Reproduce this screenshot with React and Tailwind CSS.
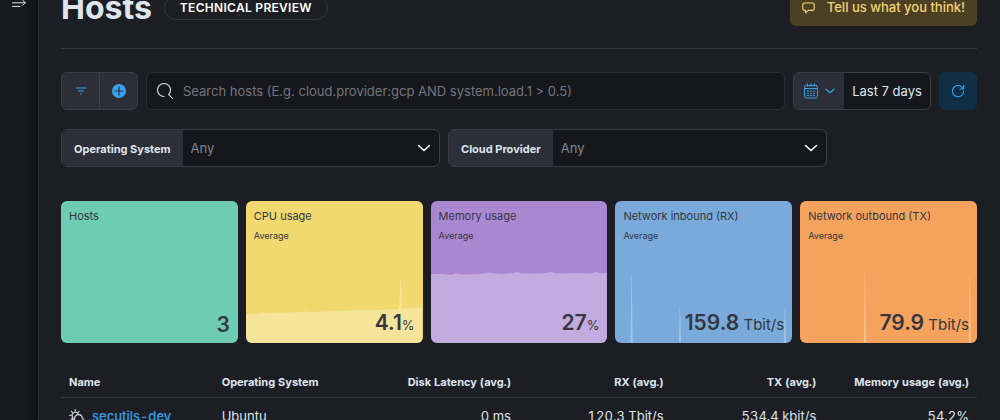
function SearchIcon() {
  return (
    <svg width="16" height="16" viewBox="0 0 16 16" fill="#dfe5ef">
      <path d="M11.271 11.978l3.872 3.873a.502.502 0 00.708 0 .502.502 0 000-.708l-3.565-3.564c2.38-2.747 2.267-6.923-.342-9.532-2.73-2.73-7.17-2.73-9.898 0-2.728 2.729-2.728 7.17 0 9.9a6.955 6.955 0 004.949 2.05.5.5 0 000-1 5.96 5.96 0 01-4.242-1.757 6.01 6.01 0 010-8.486 6.004 6.004 0 018.484 0 6.01 6.01 0 010 8.486.5.5 0 00.034.738z" />
    </svg>
  );
}

function ChevronIcon({ className, size = 14 }) {
  return (
    <svg className={className} width={size} height={size} viewBox="0 0 14 14" fill="none" stroke="currentColor" strokeWidth="1.6" strokeLinecap="round" strokeLinejoin="round">
      <path d="M1.5 4.5l5.5 5 5.5-5" />
    </svg>
  );
}

function CalendarIcon() {
  return (
    <svg width="16" height="16" viewBox="0 0 16 16" fill="none" stroke="currentColor" strokeWidth="1">
      <rect x="1.5" y="2.5" width="13" height="12.5" rx="1.8" />
      <path d="M1.5 5.5h13M4.5 .5v3M8 .5v3M11.5 .5v3" />
      <path d="M4 8h2M7 8h2M10 8h2M4 10.3h2M7 10.3h2M10 10.3h2M4 12.6h2M7 12.6h2M10 12.6h2" />
    </svg>
  );
}

function CloudSunIcon() {
  return (
    <svg width="16" height="16" viewBox="0 0 16 16" fill="none" stroke="#dfe5ef" strokeWidth="1.1" strokeLinecap="round">
      <path d="M6.2 .6v1.6M2.3 2.3l1.1 1.1M.6 6.2h1.6M10.1 2.3L9 3.4M2.4 10l1-.9" />
      <path d="M4.2 9a3.3 3.3 0 1 1 5.2-3.8" />
      <path d="M5 15a2.4 2.4 0 0 1 .6-4.8 3.9 3.9 0 0 1 3.6-4.6 4.1 4.1 0 0 1 4.2 3.8 3 3 0 0 1-.9 5.6z" />
    </svg>
  );
}

const metrics = [
  { title: 'Hosts', value: '3', color: 'bg-[#6dccb1]' },
  {
    title: 'CPU usage', sub: 'Average', value: '4.1', unit: '%', color: 'bg-[#f1d86f]',
    area: 'M0 113L14 112.5L16 111.5L18 112.3L59 111L60 108.5L61 111L90 110L120 109L152 108L153.5 106L154.3 79L155.3 79L156 107.5L176 106.5V142H0z',
  },
  {
    title: 'Memory usage', sub: 'Average', value: '27', unit: '%', color: 'bg-[#aa87d1]',
    area: 'M0 73L12 73L20 74L25 72.5L33 73.5L50 73L56 71.5L70 73L82 72L86 71L91 72.5L112 72.5L120 71L126 72.5L148 72L160 72.5L165 71L170 72.5L177 72V142H0z',
  },
  {
    title: 'Network inbound (RX)', sub: 'Average', value: '159.8', unit: ' Tbit/s', color: 'bg-[#79aad9]',
    area: 'M15.5 142L16.3 74h.4L17.8 142zM64 142L64.8 107h.4L66.2 142zM169 142L169.8 107h.4L171.2 142z',
  },
  {
    title: 'Network outbound (TX)', sub: 'Average', value: '79.9', unit: ' Tbit/s', color: 'bg-[#f5a35c]',
    area: 'M64 142L64.8 71h.4L66.2 142zM169 142L169.8 75h.4L171.2 142z',
  },
];

function MetricCard({ title, sub, value, unit, color, area }) {
  return (
    <div className={`relative flex h-[142px] flex-col overflow-hidden rounded-md px-2 pt-1.5 pb-1 text-[#343741] ${color}`}>
      {area && (
        <svg className="absolute inset-0 h-full w-full" viewBox="0 0 177 142" preserveAspectRatio="none">
          <path d={area} fill="#fff" fillOpacity="0.3" />
        </svg>
      )}
      <h2 className="relative text-[11px] leading-[18px]">{title}</h2>
      {sub && <p className="relative mt-1 text-[9px] leading-[14px]">{sub}</p>}
      <p className="relative mt-auto text-right text-[21px] leading-[28px] font-semibold whitespace-pre">
        {value}
        {unit && <span className={unit === '%' ? 'text-[13px] font-normal' : 'text-[15px] font-normal'}>{unit}</span>}
      </p>
    </div>
  );
}

function FilterSelect({ id, label }) {
  return (
    <div className="flex h-[38px] w-[379px] overflow-hidden rounded-md border border-[#3a3c44] bg-[#16171c]">
      <label htmlFor={id} className="flex items-center bg-[#2c2e38] px-3 pt-0.5 text-[11px] font-bold">{label}</label>
      <div className="relative flex-1">
        <select id={id} className="h-full w-full appearance-none bg-transparent px-2 pt-0.5 text-[13px] text-[#81858f] outline-none">
          <option>Any</option>
        </select>
        <ChevronIcon className="pointer-events-none absolute top-[11px] right-2 text-white" />
      </div>
    </div>
  );
}

const columns = ['Name', 'Operating System', 'Disk Latency (avg.)', 'RX (avg.)', 'TX (avg.)', 'Memory usage (avg.)'];

const hosts = [
  { name: 'secutils-dev', os: 'Ubuntu', stats: ['0 ms', '120.3 Tbit/s', '534.4 kbit/s', '54.2%'] },
];

export default function App() {
  return (
    <div className="flex h-screen overflow-hidden bg-[#1d1e24] font-['Inter',sans-serif] text-[13px] text-[#dfe5ef]">
      <aside className="w-[39px] shrink-0 border-r border-[#2c2d33] bg-linear-to-r from-[#18191e] from-60% to-[#111216]">
        <button aria-label="Expand navigation" className="ml-3 block">
          <svg width="14" height="8" viewBox="0 0 14 8" fill="none" stroke="#dfe5ef" strokeWidth="1" strokeLinecap="round" strokeLinejoin="round">
            <path d="M.5 2.8h12.8M.5 6.4h7.5M10.8 .2l2.5 2.6-2.5 2.4" />
          </svg>
        </button>
      </aside>

      <main className="min-w-0 flex-1 pr-[23px] pl-[22px]">
        {/* Page header */}
        <header className="-mt-3 flex h-[61px] items-start justify-between border-b border-[#343541]">
          <div className="flex h-[38px] items-center gap-3 pt-0.5">
            <h1 className="text-[32px] leading-[38px] font-bold">Hosts</h1>
            <span className="flex h-6 items-center rounded-full border border-[#343741] px-[15px] text-[12px] font-semibold tracking-wide text-white uppercase">Technical preview</span>
          </div>
          <button className="flex h-[38px] items-center gap-3 rounded-md bg-[#4b4024] px-3 pt-0.5 font-medium text-[#f3d371]">
            <svg width="13" height="12" viewBox="0 0 13 12" fill="none" stroke="currentColor" strokeWidth="1.1" strokeLinejoin="round">
              <path d="M2.5 1h8a1.7 1.7 0 0 1 1.7 1.7v4a1.7 1.7 0 0 1-1.7 1.7H6.3L3.5 11V8.4h-1A1.7 1.7 0 0 1 .8 6.7v-4A1.7 1.7 0 0 1 2.5 1z" />
            </svg>
            Tell us what you think!
          </button>
        </header>

        {/* Search bar */}
        <div className="mt-[23px] flex h-[38px] gap-2">
          <div className="flex w-[77px] shrink-0 divide-x divide-[#3f414a] overflow-hidden rounded-md border border-[#3a3c44] bg-[#2c2e38] text-[#36a2ef]">
            <button aria-label="Saved query menu" className="flex flex-1 items-center justify-center">
              <svg width="10" height="8" viewBox="0 0 10 8" stroke="currentColor" strokeWidth="1.1">
                <path d="M0 1h10M2 4h6M4.2 7h1.6" />
              </svg>
            </button>
            <button aria-label="Add filter" className="flex flex-1 items-center justify-center">
              <svg width="14" height="14" viewBox="0 0 14 14">
                <circle cx="7" cy="7" r="7" fill="currentColor" />
                <path d="M7 3v8M3 7h8" stroke="#2c2e38" strokeWidth="1.2" strokeLinecap="round" />
              </svg>
            </button>
          </div>
          <label className="flex min-w-0 flex-1 items-center gap-2.5 rounded-md border border-[#2b2c33] bg-[#16171c] px-2.5">
            <SearchIcon />
            <input type="text" aria-label="Search hosts" placeholder="Search hosts (E.g. cloud.provider:gcp AND system.load.1 > 0.5)" className="min-w-0 flex-1 bg-transparent pt-0.5 outline-none placeholder:text-[#73767f]" />
          </label>
          <div className="flex w-[138px] shrink-0 overflow-hidden rounded-md border border-[#3a3c44] bg-[#16171c]">
            <button aria-label="Date quick select" className="flex w-[50px] items-center justify-center gap-1.5 bg-[#2c2e38] text-[#36a2ef]">
              <CalendarIcon />
              <ChevronIcon size={10} />
            </button>
            <button className="flex-1 pt-0.5 whitespace-nowrap">Last 7 days</button>
          </div>
          <button aria-label="Refresh" className="flex w-[38px] shrink-0 items-center justify-center rounded-md bg-[#102f46] text-[#36a2ef]">
            <svg width="14" height="14" viewBox="0 0 14 14" fill="none" stroke="currentColor" strokeWidth="1.1" strokeLinecap="round" strokeLinejoin="round">
              <path d="M12.6 7.2A5.6 5.6 0 1 1 11.2 3.4L12.6 5M12.7 1.2V5H9" />
            </svg>
          </button>
        </div>

        {/* Filters */}
        <div className="mt-[19px] flex gap-2">
          <FilterSelect id="os" label="Operating System" />
          <FilterSelect id="provider" label="Cloud Provider" />
        </div>

        {/* Metric cards */}
        <div className="mt-[34px] grid grid-cols-5 gap-2">
          {metrics.map(m => <MetricCard key={m.title} {...m} />)}
        </div>

        {/* Hosts table */}
        <table className="mt-6 w-full table-fixed tabular-nums">
          <thead>
            <tr className="h-[30px] border-b border-[#343741] text-[11px]">
              {columns.map((c, i) => (
                <th key={c} className={`px-2 font-bold whitespace-nowrap ${i < 2 ? 'text-left' : 'text-right'}`}>{c}</th>
              ))}
            </tr>
          </thead>
          <tbody>
            {hosts.map(h => (
              <tr key={h.name} className="h-[39px] border-b border-[#343741]">
                <td className="px-2">
                  <div className="flex items-center gap-[7px]">
                    <CloudSunIcon />
                    <a href="#" className="font-medium text-[#36a2ef]">{h.name}</a>
                  </div>
                </td>
                <td className="px-2">{h.os}</td>
                {h.stats.map(s => <td key={s} className="px-2 text-right">{s}</td>)}
              </tr>
            ))}
          </tbody>
        </table>
      </main>
    </div>
  );
}
